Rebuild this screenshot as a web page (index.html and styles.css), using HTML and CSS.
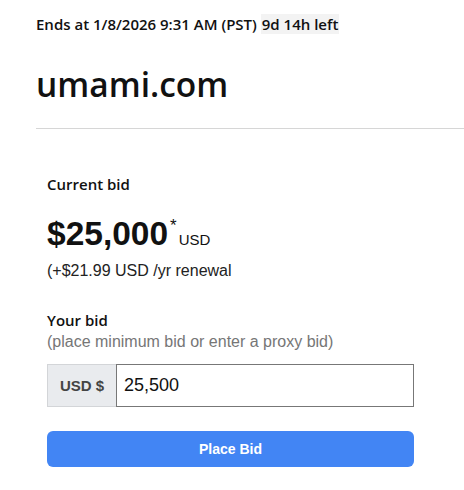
FILE: index.html
```html
<!DOCTYPE html>
<html>
<head>
<meta charset="utf-8">
<link rel="stylesheet" href="styles.css">
</head>
<body>
<div class="page">
  <header class="head">
    <p class="ends">Ends at 1/8/2026 9:31 AM (PST) <span class="left">9d 14h left</span></p>
    <h1 class="domain">umami.com</h1>
  </header>
  <section class="bid">
    <h2 class="label">Current bid</h2>
    <div class="price"><span class="amount">$25,000</span><sup class="star">*</sup><span class="cur">USD</span></div>
    <p class="renew">(+$21.99 USD /yr renewal</p>
    <h2 class="label your">Your bid</h2>
    <p class="hint">(place minimum bid or enter a proxy bid)</p>
    <div class="group">
      <span class="addon">USD $</span>
      <input class="field" type="text" value="25,500">
    </div>
    <button class="btn">Place Bid</button>
  </section>
</div>
</body>
</html>
```
FILE: styles.css
```css
html, body { margin: 0; padding: 0; background: #fff; }
body { font-family: "Liberation Sans", Arial, sans-serif; color: #111; }
.page { padding: 14px 0 0 36px; }
.head { border-bottom: 1px solid #d6d6d6; padding-bottom: 24px; }
.ends { margin: 0; font-family: "Open Sans", sans-serif; font-weight: 600; font-size: 15px; line-height: 21px; color: #111; }
.left { background: #f3f3f3; padding: 0 1px; }
.domain { margin: 29px 0 0; font-family: "Open Sans", sans-serif; font-weight: 600; font-size: 33.5px; line-height: 40px; color: #111; letter-spacing: 0; }
.bid { padding: 46px 0 0 11px; width: 367px; }
.label { margin: 0; font-family: "Open Sans", sans-serif; font-weight: 600; font-size: 15px; line-height: 18px; color: #111; }
.price { margin-top: 24px; display: flex; align-items: flex-end; line-height: 36px; }
.amount { font-weight: 700; font-size: 33.5px; line-height: 34px; }
.star { font-size: 17px; line-height: 16px; align-self: flex-start; margin: 1px 2px 0 2px; }
.cur { font-size: 15px; line-height: 18px; margin-bottom: 2px; }
.renew { margin: 10px 0 0; font-size: 16px; line-height: 20px; color: #222; }
.your { margin-top: 30px; }
.hint { margin: 3px 0 0; font-size: 16px; line-height: 20px; color: #767676; }
.group { display: flex; margin-top: 12px; height: 43px; }
.addon { display: flex; align-items: center; justify-content: center; width: 68px; background: #e9ebee; border: 1px solid #d3d5d8; border-right: none; font-weight: 700; font-size: 15px; color: #444; }
.field { flex: 1; box-sizing: border-box; height: 43px; border: 1px solid #777; margin: 0; padding: 0 7px; font-family: "Liberation Sans", Arial, sans-serif; font-size: 18px; color: #111; outline: none; }
.btn { display: block; width: 100%; margin-top: 24px; height: 36px; border: none; border-radius: 6px; background: #4285f4; color: #fff; font-family: "Liberation Sans", Arial, sans-serif; font-weight: 700; font-size: 14px; }
```
